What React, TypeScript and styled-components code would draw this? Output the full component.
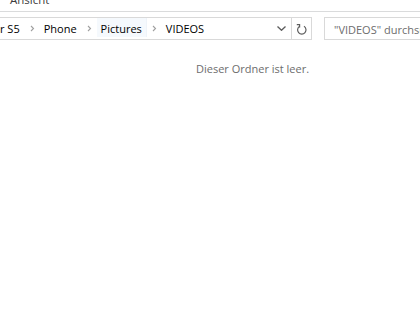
import React from "react";
import styled, { createGlobalStyle } from "styled-components";

const GlobalStyle = createGlobalStyle`
  html, body {
    margin: 0;
    padding: 0;
    background: #ffffff;
  }
  body {
    font-family: "Segoe UI", "Open Sans", "Noto Sans", sans-serif;
    font-size: 11px;
    color: #000000;
  }
`;

const Window = styled.div`
  width: 420px;
  height: 320px;
  overflow: hidden;
  background: #ffffff;
  display: flex;
  flex-direction: column;
`;

const RibbonTabs = styled.div`
  height: 11px;
  border-bottom: 1px solid #dadbdc;
  display: flex;
  align-items: flex-start;
  overflow: hidden;
  padding-left: 10px;
`;

const TabLabel = styled.span`
  font-size: 11.5px;
  line-height: 12px;
  margin-top: -6px;
  color: #3c3c3c;
`;

const NavBar = styled.div`
  display: flex;
  align-items: center;
  padding-top: 5px;
  height: 23px;
`;

const AddressBox = styled.div`
  flex: 0 0 312px;
  height: 23px;
  box-sizing: border-box;
  border: 1px solid #d9d9d9;
  border-left: none;
  display: flex;
  align-items: stretch;
`;

const Crumbs = styled.div`
  flex: 1;
  display: flex;
  align-items: stretch;
  overflow: hidden;
`;

const Crumb = styled.span<{ $hover?: boolean }>`
  display: flex;
  align-items: center;
  padding: 1px 4px 0;
  margin-bottom: 2px;
  white-space: nowrap;
  background: ${({ $hover }) => ($hover ? "#f5f9fd" : "transparent")};
  border-right: 1px solid ${({ $hover }) => ($hover ? "#eef3f9" : "transparent")};
  &:first-child {
    padding-left: 0;
  }
`;

const Separator = styled.span`
  width: 15px;
  display: flex;
  align-items: center;
  justify-content: center;
`;

const IconButton = styled.div<{ $divider?: boolean }>`
  width: ${({ $divider }) => ($divider ? "19px" : "20px")};
  display: flex;
  align-items: center;
  justify-content: center;
  border-left: ${({ $divider }) => ($divider ? "1px solid #d9d9d9" : "none")};
`;

const SearchBox = styled.div`
  flex: 1;
  margin-left: 12px;
  height: 23px;
  box-sizing: border-box;
  border: 1px solid #d9d9d9;
  border-right: none;
  display: flex;
  align-items: center;
  padding: 1px 0 0 9px;
  white-space: nowrap;
  overflow: hidden;
  color: #6d6d6d;
`;

const Content = styled.div`
  flex: 1;
  padding: 21px 0 0 196px;
`;

const EmptyMessage = styled.span`
  color: #6d6d6d;
`;

const Chevron = () => (
  <svg width="5" height="7" viewBox="0 0 5 7">
    <path d="M1 1 L3.5 3.5 L1 6" fill="none" stroke="#a0a0a0" strokeWidth="1.1" />
  </svg>
);

const DropChevron = () => (
  <svg width="9" height="5" viewBox="0 0 9 5">
    <path d="M0.5 0.5 L4.5 4.3 L8.5 0.5" fill="none" stroke="#5c5c5c" strokeWidth="1.3" />
  </svg>
);

const RefreshIcon = () => (
  <svg width="11" height="12" viewBox="0 0 11 12">
    <path
      d="M3.6 3.3 A4.2 4.2 0 1 0 8 3.3"
      fill="none"
      stroke="#5c5c5c"
      strokeWidth="1.2"
    />
    <path d="M0.8 1.6 L3.6 1.6 L3.6 4.4" fill="none" stroke="#5c5c5c" strokeWidth="1.2" />
  </svg>
);

const path = ["r S5", "Phone", "Pictures", "VIDEOS"];

export default function App() {
  return (
    <>
      <GlobalStyle />
      <Window>
        <RibbonTabs>
          <TabLabel>Ansicht</TabLabel>
        </RibbonTabs>
        <NavBar>
          <AddressBox>
            <Crumbs>
              {path.map((name, i) => (
                <React.Fragment key={name}>
                  {i > 0 && (
                    <Separator>
                      <Chevron />
                    </Separator>
                  )}
                  <Crumb $hover={name === "Pictures"}>{name}</Crumb>
                </React.Fragment>
              ))}
            </Crumbs>
            <IconButton>
              <DropChevron />
            </IconButton>
            <IconButton $divider>
              <RefreshIcon />
            </IconButton>
          </AddressBox>
          <SearchBox>"VIDEOS" durchsuchen</SearchBox>
        </NavBar>
        <Content>
          <EmptyMessage>Dieser Ordner ist leer.</EmptyMessage>
        </Content>
      </Window>
    </>
  );
}
